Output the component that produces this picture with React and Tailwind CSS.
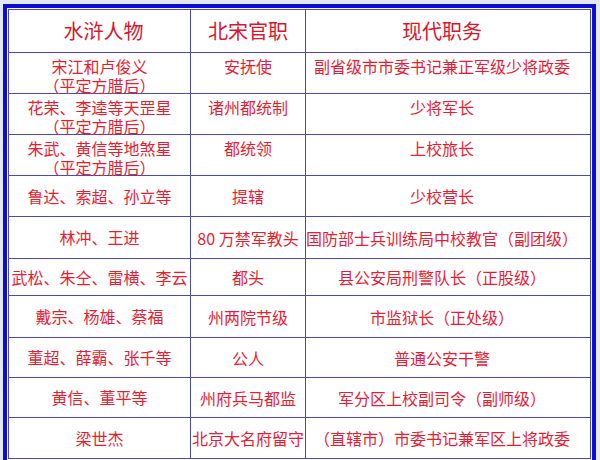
const rows = [
  { name: ["宋江和卢俊义", "（平定方腊后）"], song: "安抚使", now: "副省级市市委书记兼正军级少将政委" },
  { name: ["花荣、李逵等天罡星", "（平定方腊后）"], song: "诸州都统制", now: "少将军长" },
  { name: ["朱武、黄信等地煞星", "（平定方腊后）"], song: "都统领", now: "上校旅长" },
  { name: ["鲁达、索超、孙立等"], song: "提辖", now: "少校营长" },
  { name: ["林冲、王进"], song: "80 万禁军教头", now: "国防部士兵训练局中校教官（副团级）" },
  { name: ["武松、朱仝、雷横、李云"], song: "都头", now: "县公安局刑警队长（正股级）" },
  { name: ["戴宗、杨雄、蔡福"], song: "州两院节级", now: "市监狱长（正处级）" },
  { name: ["董超、薛霸、张千等"], song: "公人", now: "普通公安干警" },
  { name: ["黄信、董平等"], song: "州府兵马都监", now: "军分区上校副司令（副师级）" },
  { name: ["梁世杰"], song: "北京大名府留守", now: "（直辖市）市委书记兼军区上将政委" },
];

const Cell = ({ children, twoLine, className = "" }) => (
  <div
    className={`flex justify-center border-r border-b border-[#4a4ab0] text-center whitespace-nowrap ${
      twoLine ? "items-start pt-[4px]" : "items-center"
    } ${className}`}
  >
    {children}
  </div>
);

export default function App() {
  return (
    <div
      className="w-[600px] h-[460px] overflow-hidden bg-[#e3e7f0] pt-[4px] pl-[3px]"
      style={{ fontFamily: '"Noto Sans CJK SC", "Noto Sans", sans-serif' }}
    >
      <div className="w-[593px] h-[480px] border-[4px] border-[#0c0cd4] bg-white p-px">
        <div className="grid grid-cols-[182px_115px_1fr] grid-rows-[43px_41px_41px_41px_41px_42px_37px_42px_40px_40px_41px] border-t border-l border-[#4a4ab0] text-[#e51e35] text-[16px] leading-[18px]">
          <Cell className="text-[20px] leading-[24px] text-[#d8162e] pl-2">水浒人物</Cell>
          <Cell className="text-[20px] leading-[24px] text-[#d8162e]">北宋官职</Cell>
          <Cell className="text-[20px] leading-[24px] text-[#d8162e] pr-3">现代职务</Cell>
          {rows.map((r, i) => {
            const two = r.name.length > 1;
            return [
              <Cell key={`a${i}`} twoLine={two}>
                <div className="flex flex-col items-center leading-[19px]">
                  {r.name.map((t) => (
                    <span key={t}>{t}</span>
                  ))}
                </div>
              </Cell>,
              <Cell key={`b${i}`} twoLine={two}>{r.song}</Cell>,
              <Cell key={`c${i}`} twoLine={two} className="pr-3">{r.now}</Cell>,
            ];
          })}
        </div>
      </div>
    </div>
  );
}
